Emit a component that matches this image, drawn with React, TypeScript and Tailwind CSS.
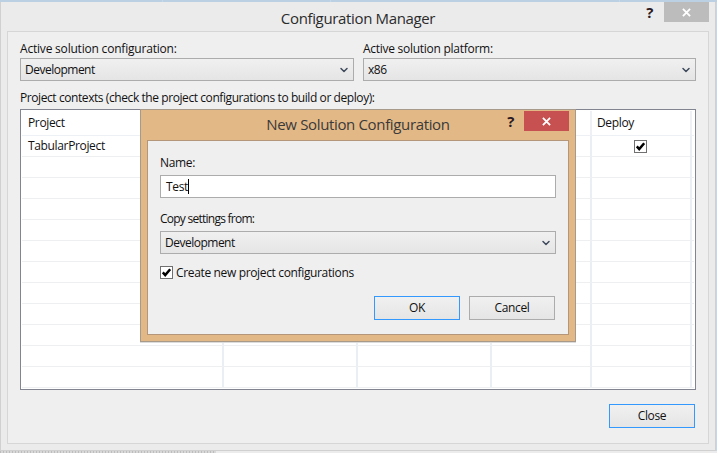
import { ChevronDown } from "lucide-react";

const rows = Array.from({ length: 12 });

function CheckMark() {
  return (
    <svg viewBox="0 0 13 13" className="size-[13px]">
      <rect x="0.5" y="0.5" width="12" height="12" fill="#fff" stroke="#707070" />
      <path d="M2.8 6.4 L5.2 9 L10.2 3.2" fill="none" stroke="#000" strokeWidth="2.5" />
    </svg>
  );
}

function CloseGlyph() {
  return (
    <svg viewBox="0 0 10 10" className="size-[9px]">
      <path d="M1 1 L9 9 M9 1 L1 9" stroke="#fff" strokeWidth="2" />
    </svg>
  );
}

function Combo({ value, className }: { value: string; className: string }) {
  return (
    <div
      className={`flex h-[23px] items-center justify-between border border-[#acacac] bg-gradient-to-b from-[#f0f0f0] to-[#e5e5e5] pl-[4px] pr-[3px] text-[#111] ${className}`}
    >
      <span className="tracking-[-0.5px]">{value}</span>
      <ChevronDown className="size-[12px] text-[#3f4a5c]" strokeWidth={3} />
    </div>
  );
}

function DialogButton({ label, focused }: { label: string; focused?: boolean }) {
  return (
    <button
      type="button"
      className={`h-[24px] w-[86px] border bg-gradient-to-b from-[#f0f0f0] to-[#e5e5e5] text-[#111] ${
        focused ? "border-[#3399ff]" : "border-[#acacac]"
      }`}
    >
      {label}
    </button>
  );
}

function NewConfigDialog() {
  return (
    <div className="absolute left-[140px] top-[109px] flex h-[233px] w-[436px] flex-col border border-[#a89a8a] bg-[#e3b887] pl-[6px] pr-[6px] shadow-[0_1px_0_#dcdcdc]">
      <div className="relative flex h-[30px] shrink-0 items-center justify-center pb-[1px] text-[15px] text-[#3a3a3a]">
        New Solution Configuration
        <span className="absolute right-[55px] top-[4px] text-[15px] font-bold text-[#2b1a22]">?</span>
        <div className="absolute right-0 top-[1px] flex h-[20px] w-[45px] items-center justify-center bg-[#c75050]">
          <CloseGlyph />
        </div>
      </div>
      <div className="flex h-[195px] flex-col border border-[#b4977a] bg-[#efefef] px-[12px] pt-[16px]">
        <div className="h-[18px] text-[#111]">Name:</div>
        <div className="flex h-[23px] w-[396px] items-center border border-[#acacac] bg-white pl-[5px] text-[#111]">
          Test
          <span className="h-[15px] w-px bg-black" />
        </div>
        <div className="mt-[15px] h-[18px] tracking-[-0.75px] text-[#111]">Copy settings from:</div>
        <Combo value="Development" className="w-[396px]" />
        <div className="mt-[12px] flex h-[13px] items-center gap-[3px] text-[#111]">
          <CheckMark />
          Create new project configurations
        </div>
        <div className="mt-[17px] flex justify-end gap-[9px] pr-[1px]">
          <DialogButton label="OK" focused />
          <DialogButton label="Cancel" />
        </div>
      </div>
    </div>
  );
}

export default function App() {
  const font = "font-['Open_Sans','Noto_Sans',sans-serif]";
  return (
    <div className={`relative flex h-[453px] w-[717px] flex-col overflow-hidden bg-[#c4d8ec] text-[12px] leading-none tracking-[-0.35px] ${font}`}>
      {/* desktop sliver above the window */}
      <div className="flex h-[2px] shrink-0 gap-px">
        <div className="w-[162px] bg-[#bcd0e4]" />
        <div className="w-[167px] bg-[#bcd0e4]" />
        <div className="w-[288px] bg-[#bcd0e4]" />
        <div className="flex-1 bg-[#bcd0e4]" />
      </div>

      <div className="flex h-[449px] w-[716px] shrink-0 flex-col border-x border-b border-[#d0d0d0] bg-[#ebebeb]">
        <div className="relative flex h-[29px] shrink-0 items-center justify-center pt-[3px] text-[15px] text-[#2b2b2b]">
          Configuration Manager
          <span className="absolute right-[62px] top-[3px] text-[15px] font-bold text-[#2b1a22]">?</span>
          <div className="absolute right-[6px] top-0 flex h-[20px] w-[45px] items-center justify-center bg-[#bcbcbc]">
            <CloseGlyph />
          </div>
        </div>

        <div className="ml-[6px] flex h-[413px] w-[702px] flex-col border border-[#d6d6d6] bg-[#efefef] pl-[12px] pr-[12px] pt-[10px]">
          <div className="flex gap-[9px]">
            <div className="w-[334px]">
              <div className="h-[16px] pt-[1px] tracking-[-0.2px] text-[#111]">Active solution configuration:</div>
              <Combo value="Development" className="w-[334px]" />
            </div>
            <div className="w-[333px]">
              <div className="h-[16px] pt-[1px] tracking-[-0.27px] text-[#111]">Active solution platform:</div>
              <Combo value="x86" className="w-[333px]" />
            </div>
          </div>

          <div className="mt-[11px] h-[17px] tracking-[-0.42px] text-[#111]">
            Project contexts (check the project configurations to build or deploy):
          </div>

          <div className="h-[281px] w-[676px] border border-[#82858f] bg-white p-px">
            <div className="grid h-[25px] grid-cols-[202px_134px_134px_100px_100px] border-b border-[#edf1f5] text-[#111]">
              <div className="border-r-2 border-[#edf1f5] pl-[6px] pt-[6px]">Project</div>
              <div className="border-r-2 border-[#edf1f5]" />
              <div className="border-r-2 border-[#edf1f5]" />
              <div className="border-r-2 border-[#edf1f5]" />
              <div className="border-r-2 border-[#edf1f5] pl-[5px] pt-[6px]">Deploy</div>
            </div>
            {rows.map((_, i) => (
              <div
                key={i}
                className="grid h-[21px] grid-cols-[202px_134px_134px_100px_100px] border-b border-[#eeeff1] text-[#111]"
              >
                <div className="border-r-2 border-[#e9eff5] pl-[6px] pt-[4px]">{i === 0 && "TabularProject"}</div>
                <div className="border-r-2 border-[#e9eff5]" />
                <div className="border-r-2 border-[#e9eff5]" />
                <div className="border-r-2 border-[#e9eff5]" />
                <div className="flex items-center justify-center border-r-2 border-[#e9eff5] pr-[2px]">
                  {i === 0 && <CheckMark />}
                </div>
              </div>
            ))}
          </div>

          <div className="mt-[14px] flex justify-end pr-[1px]">
            <DialogButton label="Close" focused />
          </div>
        </div>
      </div>

      {/* hatched sliver below the window */}
      <div className="flex flex-1">
        <div className="w-[216px] bg-[repeating-linear-gradient(90deg,#bdbdbd_0_1px,#d8d8d8_1px_3px)]" />
        <div className="flex-1 bg-[#ececec]" />
      </div>

      <NewConfigDialog />
    </div>
  );
}
